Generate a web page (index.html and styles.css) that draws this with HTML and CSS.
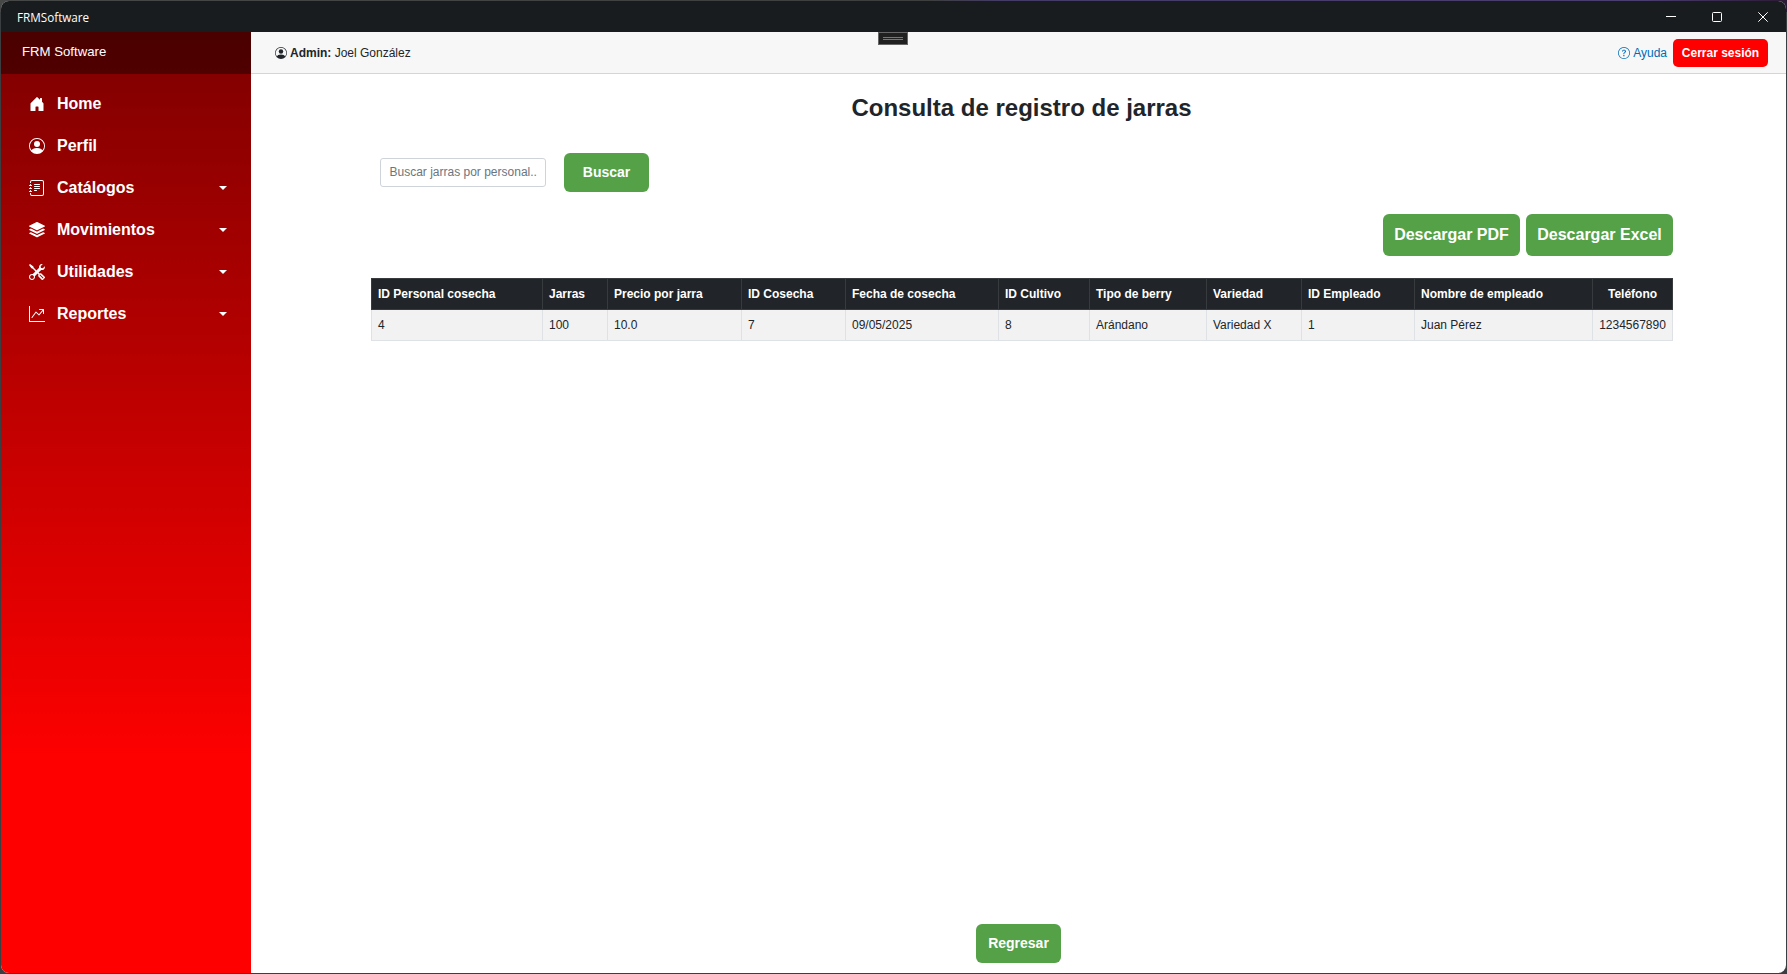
FILE: index.html
```html
<!DOCTYPE html>
<html lang="es">
<head>
<meta charset="utf-8">
<title>FRMSoftware</title>
<link rel="stylesheet" href="styles.css">
</head>
<body>
<div class="window">
  <header class="titlebar">
    <span class="titlebar-name">FRMSoftware</span>
    <div class="controls">
      <svg width="10" height="10" viewBox="0 0 10 10"><path d="M0 4.5h10"/></svg>
      <svg width="10" height="10" viewBox="0 0 10 10"><rect x=".5" y=".5" width="9" height="9" rx="1"/></svg>
      <svg width="10" height="10" viewBox="0 0 10 10"><path d="M.3.3l9.4 9.4M9.7.3L.3 9.7"/></svg>
    </div>
  </header>
  <div class="app">
    <aside class="sidebar">
      <div class="brand">FRM Software</div>
      <nav class="nav">
        <a class="item"><svg class="icon" viewBox="0 0 16 16"><path d="M6.5 14.5v-3.505c0-.245.25-.495.5-.495h2c.25 0 .5.25.5.5v3.5a.5.5 0 0 0 .5.5h4a.5.5 0 0 0 .5-.5v-7a.5.5 0 0 0-.146-.354L13 5.793V2.5a.5.5 0 0 0-.5-.5h-1a.5.5 0 0 0-.5.5v1.293L8.354 1.146a.5.5 0 0 0-.708 0l-6 6A.5.5 0 0 0 1.5 7.5v7a.5.5 0 0 0 .5.5h4a.5.5 0 0 0 .5-.5Z"/></svg><span class="label">Home</span></a>
        <a class="item"><svg class="icon" viewBox="0 0 16 16"><path d="M11 6a3 3 0 1 1-6 0 3 3 0 0 1 6 0z"/><path fill-rule="evenodd" d="M0 8a8 8 0 1 1 16 0A8 8 0 0 1 0 8zm8-7a7 7 0 0 0-5.468 11.37C3.242 11.226 4.805 10 8 10s4.757 1.225 5.468 2.37A7 7 0 0 0 8 1z"/></svg><span class="label">Perfil</span></a>
        <a class="item"><svg class="icon" viewBox="0 0 16 16"><path d="M5 10.5a.5.5 0 0 1 .5-.5h2a.5.5 0 0 1 0 1h-2a.5.5 0 0 1-.5-.5zm0-2a.5.5 0 0 1 .5-.5h5a.5.5 0 0 1 0 1h-5a.5.5 0 0 1-.5-.5zm0-2a.5.5 0 0 1 .5-.5h5a.5.5 0 0 1 0 1h-5a.5.5 0 0 1-.5-.5zm0-2a.5.5 0 0 1 .5-.5h5a.5.5 0 0 1 0 1h-5a.5.5 0 0 1-.5-.5z"/><path d="M3 0h10a2 2 0 0 1 2 2v12a2 2 0 0 1-2 2H3a2 2 0 0 1-2-2v-1h1v1a1 1 0 0 0 1 1h10a1 1 0 0 0 1-1V2a1 1 0 0 0-1-1H3a1 1 0 0 0-1 1v1H1V2a2 2 0 0 1 2-2z"/><path d="M1 5v-.5a.5.5 0 0 1 1 0V5h.5a.5.5 0 0 1 0 1h-2a.5.5 0 0 1 0-1H1zm0 3v-.5a.5.5 0 0 1 1 0V8h.5a.5.5 0 0 1 0 1h-2a.5.5 0 0 1 0-1H1zm0 3v-.5a.5.5 0 0 1 1 0v.5h.5a.5.5 0 0 1 0 1h-2a.5.5 0 0 1 0-1H1z"/></svg><span class="label">Catálogos</span><i class="caret"></i></a>
        <a class="item"><svg class="icon" viewBox="0 0 16 16"><path d="m14.12 10.163 1.715.858c.22.11.22.424 0 .534L8.267 15.34a.598.598 0 0 1-.534 0L.165 11.555a.299.299 0 0 1 0-.534l1.716-.858 5.317 2.659c.505.252 1.1.252 1.604 0l5.317-2.66zM7.733.063a.598.598 0 0 1 .534 0l7.568 3.784a.3.3 0 0 1 0 .535L8.267 8.165a.598.598 0 0 1-.534 0L.165 4.382a.299.299 0 0 1 0-.535L7.733.063z"/><path d="m14.12 6.576 1.715.858c.22.11.22.424 0 .534l-7.568 3.784a.598.598 0 0 1-.534 0L.165 7.968a.299.299 0 0 1 0-.534l1.716-.858 5.317 2.659c.505.252 1.1.252 1.604 0l5.317-2.659z"/></svg><span class="label">Movimientos</span><i class="caret"></i></a>
        <a class="item"><svg class="icon" viewBox="0 0 16 16"><path d="M1 0 0 1l2.2 3.081a1 1 0 0 0 .815.419h.07a1 1 0 0 1 .708.293l2.675 2.675-2.617 2.654A3.003 3.003 0 0 0 0 13a3 3 0 1 0 5.878-.851l2.654-2.617.968.968-.305.914a1 1 0 0 0 .242 1.023l3.27 3.27a.997.997 0 0 0 1.414 0l1.586-1.586a.997.997 0 0 0 0-1.414l-3.27-3.27a1 1 0 0 0-1.023-.242L10.5 9.5l-.96-.96 2.68-2.643A3.005 3.005 0 0 0 16 3c0-.269-.035-.53-.102-.777l-2.14 2.141L12 4l-.364-1.757L13.777.102a3 3 0 0 0-3.675 3.68L7.462 6.46 4.793 3.793a1 1 0 0 1-.293-.707v-.071a1 1 0 0 0-.419-.814L1 0Zm9.646 10.646a.5.5 0 0 1 .708 0l2.914 2.915a.5.5 0 0 1-.707.707l-2.915-2.914a.5.5 0 0 1 0-.708ZM3 11l.471.242.529.026.287.445.445.287.026.529L5 13l-.242.471-.026.529-.445.287-.287.445-.529.026L3 15l-.471-.242L2 14.732l-.287-.445L1.268 14l-.026-.529L1 13l.242-.471.026-.529.445-.287.287-.445.529-.026L3 11Z"/></svg><span class="label">Utilidades</span><i class="caret"></i></a>
        <a class="item"><svg class="icon" viewBox="0 0 16 16"><path fill-rule="evenodd" d="M0 0h1v15h15v1H0V0Zm10 3.5a.5.5 0 0 1 .5-.5h4a.5.5 0 0 1 .5.5v4a.5.5 0 0 1-1 0V4.9l-3.613 4.417a.5.5 0 0 1-.74.037L7.06 6.767l-3.656 5.027a.5.5 0 0 1-.808-.588l4-5.5a.5.5 0 0 1 .758-.06l2.609 2.61L13.445 4H10.5a.5.5 0 0 1-.5-.5Z"/></svg><span class="label">Reportes</span><i class="caret"></i></a>
      </nav>
    </aside>
    <main class="main">
      <div class="toprow">
        <svg class="small-icon" viewBox="0 0 16 16"><path d="M11 6a3 3 0 1 1-6 0 3 3 0 0 1 6 0z"/><path fill-rule="evenodd" d="M0 8a8 8 0 1 1 16 0A8 8 0 0 1 0 8zm8-7a7 7 0 0 0-5.468 11.37C3.242 11.226 4.805 10 8 10s4.757 1.225 5.468 2.37A7 7 0 0 0 8 1z"/></svg>
        <span class="user"><b>Admin:</b> Joel González</span>
        <a class="help"><svg class="small-icon" viewBox="0 0 16 16"><path d="M8 15A7 7 0 1 1 8 1a7 7 0 0 1 0 14zm0 1A8 8 0 1 0 8 0a8 8 0 0 0 0 16z"/><path d="M5.255 5.786a.237.237 0 0 0 .241.247h.825c.138 0 .248-.113.266-.25.09-.656.54-1.134 1.342-1.134.686 0 1.314.343 1.314 1.168 0 .635-.374.927-.965 1.371-.673.489-1.206 1.06-1.168 1.987l.003.217a.25.25 0 0 0 .25.246h.811a.25.25 0 0 0 .25-.25v-.105c0-.718.273-.927 1.01-1.486.609-.463 1.244-.977 1.244-2.056 0-1.511-1.276-2.241-2.673-2.241-1.267 0-2.655.59-2.75 2.286zm1.557 5.763c0 .533.425.927 1.01.927.609 0 1.028-.394 1.028-.927 0-.552-.42-.94-1.029-.94-.584 0-1.009.388-1.009.94z"/></svg>Ayuda</a>
        <button class="logout">Cerrar sesión</button>
        <span class="handle"></span>
      </div>
      <section class="content">
        <h1 class="title">Consulta de registro de jarras</h1>
        <div class="search">
          <div class="field">Buscar jarras por personal..</div>
          <button class="btn">Buscar</button>
        </div>
        <div class="downloads">
          <button class="btn large pdf">Descargar PDF</button>
          <button class="btn large excel">Descargar Excel</button>
        </div>
        <table class="table">
          <colgroup><col class="c1"><col class="c2"><col class="c3"><col class="c4"><col class="c5"><col class="c6"><col class="c7"><col class="c8"><col class="c9"><col class="c10"><col class="c11"></colgroup>
          <thead><tr><th>ID Personal cosecha</th><th>Jarras</th><th>Precio por jarra</th><th>ID Cosecha</th><th>Fecha de cosecha</th><th>ID Cultivo</th><th>Tipo de berry</th><th>Variedad</th><th>ID Empleado</th><th>Nombre de empleado</th><th class="center">Teléfono</th></tr></thead>
          <tbody><tr><td>4</td><td>100</td><td>10.0</td><td>7</td><td>09/05/2025</td><td>8</td><td>Arándano</td><td>Variedad X</td><td>1</td><td>Juan Pérez</td><td class="center">1234567890</td></tr></tbody>
        </table>
        <button class="btn back">Regresar</button>
      </section>
    </main>
  </div>
</div>
</body>
</html>
```
FILE: styles.css
```css
* { box-sizing: border-box; }
body {
  margin: 0;
  height: 974px;
  padding: 1px;
  overflow: hidden;
  background: linear-gradient(90deg, #454847 0, #3c3f3e 52%, #443b66 56%, #4a3e70 92%, #2c1a35 100%) 0 0 / 100% 12px no-repeat, #3b3e40;
  font-family: "Liberation Sans", Arial, sans-serif;
  font-size: 12px;
  color: #212529;
}
button { border: 0; margin: 0; padding: 0; color: #fff; font-family: inherit; font-weight: 700; }
.window {
  height: 972px;
  display: flex;
  flex-direction: column;
  border-radius: 8px;
  overflow: hidden;
  background: #fff;
}
.titlebar {
  flex: 0 0 31px;
  display: flex;
  align-items: center;
  justify-content: space-between;
  padding: 0 18px 0 16px;
  background: #181c1f;
  color: #fff;
}
.titlebar-name { font-family: "Open Sans", "Noto Sans", sans-serif; font-size: 11.7px; line-height: 16px; }
.controls { display: flex; gap: 36px; }
.controls svg { fill: none; stroke: #fff; stroke-width: 1; }
.app { flex: 1; display: flex; min-height: 0; }
.sidebar { flex: 0 0 250px; background: linear-gradient(180deg, #7d0000 0%, #f00 78%); color: #fff; }
.brand { height: 42px; padding-left: 21px; line-height: 40px; font-size: 13.2px; background: rgba(0, 0, 0, .4); }
.nav { padding: 9px 20px 0 28px; }
.item { display: flex; align-items: center; height: 42px; font-size: 16px; font-weight: 700; }
.icon { width: 16px; height: 16px; margin-right: 12px; fill: currentColor; }
.label { flex: 1; }
.caret { margin-right: 4px; border: 4px solid transparent; border-top-color: #fff; border-bottom: 0; }
.main { flex: 1; display: flex; flex-direction: column; min-width: 0; }
.toprow {
  position: relative;
  flex: 0 0 42px;
  display: flex;
  align-items: center;
  padding: 0 18px 0 24px;
  background: #f7f7f7;
  border-bottom: 1px solid #d6d5d5;
}
.small-icon { width: 12px; height: 12px; fill: currentColor; }
.user { flex: 1; margin-left: 3px; }
.help { display: flex; align-items: center; gap: 3px; margin-right: 6px; color: #006bb7; }
.logout { width: 95px; height: 28px; border-radius: 5px; background: #f00; font-size: 12px; }
.handle {
  position: absolute;
  left: 627px;
  top: 0;
  width: 30px;
  height: 13px;
  border: 1px solid #666;
  background: linear-gradient(#777, #777) 4px 4px / 20px 1px no-repeat, linear-gradient(#777, #777) 4px 6px / 20px 1px no-repeat, #202020;
}
.content { flex: 1; display: flex; flex-direction: column; padding: 19px 113px 10px 120px; }
.title { margin: 0 1px 0 0; text-align: center; font-size: 24px; line-height: 30px; }
.search { display: flex; align-items: center; gap: 18px; margin-top: 30px; padding-left: 9px; }
.field { width: 166px; height: 29px; padding: 0 8.5px; border: 1px solid #ced4da; border-radius: 3px; line-height: 26px; color: #6c757d; white-space: nowrap; }
.btn { width: 85px; height: 39px; border-radius: 6px; background: #54a148; font-size: 14px; padding-bottom: 2px; }
.downloads { display: flex; justify-content: flex-end; gap: 6px; margin-top: 22px; }
.large { height: 42px; font-size: 16px; padding-bottom: 1px; }
.pdf { width: 137px; }
.excel { width: 147px; }
.table { width: 1302px; margin-top: 22px; border-collapse: collapse; table-layout: fixed; }
.table th, .table td { height: 31px; padding: 0 6px; text-align: left; white-space: nowrap; border: 1px solid #dee2e6; }
.table th { background: #212529; color: #fff; border-color: #373b3e; }
.table td { background: #f2f2f2; }
.table .center { text-align: center; }
.c1 { width: 171px; }
.c2 { width: 65px; }
.c3 { width: 134px; }
.c4 { width: 104px; }
.c5 { width: 153px; }
.c6 { width: 91px; }
.c7 { width: 117px; }
.c8 { width: 95px; }
.c9 { width: 113px; }
.c10 { width: 178px; }
.c11 { width: 80px; }
.back { margin: auto 0 0 605px; }
```
